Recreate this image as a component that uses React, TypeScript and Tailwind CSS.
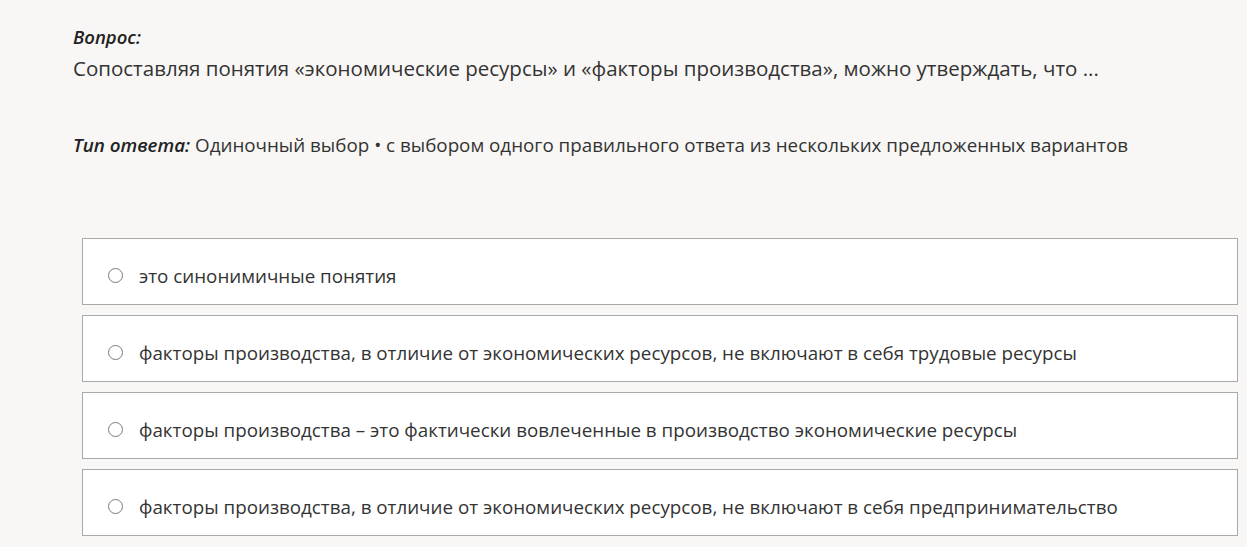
import React from "react";

const options = [
  "это синонимичные понятия",
  "факторы производства, в отличие от экономических ресурсов, не включают в себя трудовые ресурсы",
  "факторы производства – это фактически вовлеченные в производство экономические ресурсы",
  "факторы производства, в отличие от экономических ресурсов, не включают в себя предпринимательство",
];

export default function App() {
  return (
    <div
      className="min-h-[547px] w-full bg-[#f8f7f5] text-[#333333] overflow-hidden"
      style={{ fontFamily: '"Open Sans", "Noto Sans", sans-serif' }}
    >
      <div className="pl-[73px] pt-[24px]">
        <div className="text-[18.5px] leading-[26px] font-semibold italic text-[#222]">Вопрос:</div>
        <div className="text-[20.5px] leading-[33px] mt-[2px]">
          Сопоставляя понятия «экономические ресурсы» и «факторы производства», можно утверждать, что ...
        </div>
        <div className="text-[18.8px] leading-[26px] mt-[47px]">
          <span className="font-semibold italic text-[#222]">Тип ответа:</span> Одиночный выбор • с выбором одного правильного ответа из нескольких предложенных вариантов
        </div>
      </div>
      <div className="ml-[82px] mr-[9px] mt-[80px] flex flex-col gap-[10px]">
        {options.map((o) => (
          <label
            key={o}
            className="flex h-[67px] items-center border border-[#a9a9a9] bg-white pl-[25px] pt-[8px]"
          >
            <span className="h-[15px] w-[15px] rounded-full border-[1.5px] border-[#7a7a7a] bg-white shrink-0" />
            <span className="ml-[16px] text-[18.8px] leading-[24px]">{o}</span>
          </label>
        ))}
      </div>
    </div>
  );
}
